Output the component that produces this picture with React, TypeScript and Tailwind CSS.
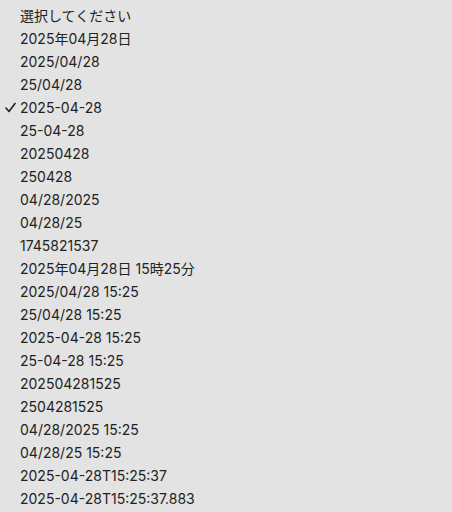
import React from "react";

const items = [
  "選択してください",
  "2025年04月28日",
  "2025/04/28",
  "25/04/28",
  "2025-04-28",
  "25-04-28",
  "20250428",
  "250428",
  "04/28/2025",
  "04/28/25",
  "1745821537",
  "2025年04月28日 15時25分",
  "2025/04/28 15:25",
  "25/04/28 15:25",
  "2025-04-28 15:25",
  "25-04-28 15:25",
  "202504281525",
  "2504281525",
  "04/28/2025 15:25",
  "04/28/25 15:25",
  "2025-04-28T15:25:37",
  "2025-04-28T15:25:37.883",
];

export default function App() {
  return (
    <div
      className="w-[452px] h-[512px] overflow-hidden bg-[#e3e3e3] pt-[4px]"
      style={{ fontFamily: 'Inter, "Noto Sans CJK JP", sans-serif' }}
    >
      {items.map((t, i) => (
        <div key={i} className="relative h-[23px] flex items-center pl-[20px] text-[14px] text-[#222222]">
          {i === 4 && (
            <svg className="absolute left-[5px] top-[6px]" width="11" height="11" viewBox="0 0 11 11">
              <path d="M1 6 L4 9.5 L10 1.5" fill="none" stroke="#222" strokeWidth="1.6" strokeLinecap="round" strokeLinejoin="round" />
            </svg>
          )}
          <span>{t}</span>
        </div>
      ))}
    </div>
  );
}
